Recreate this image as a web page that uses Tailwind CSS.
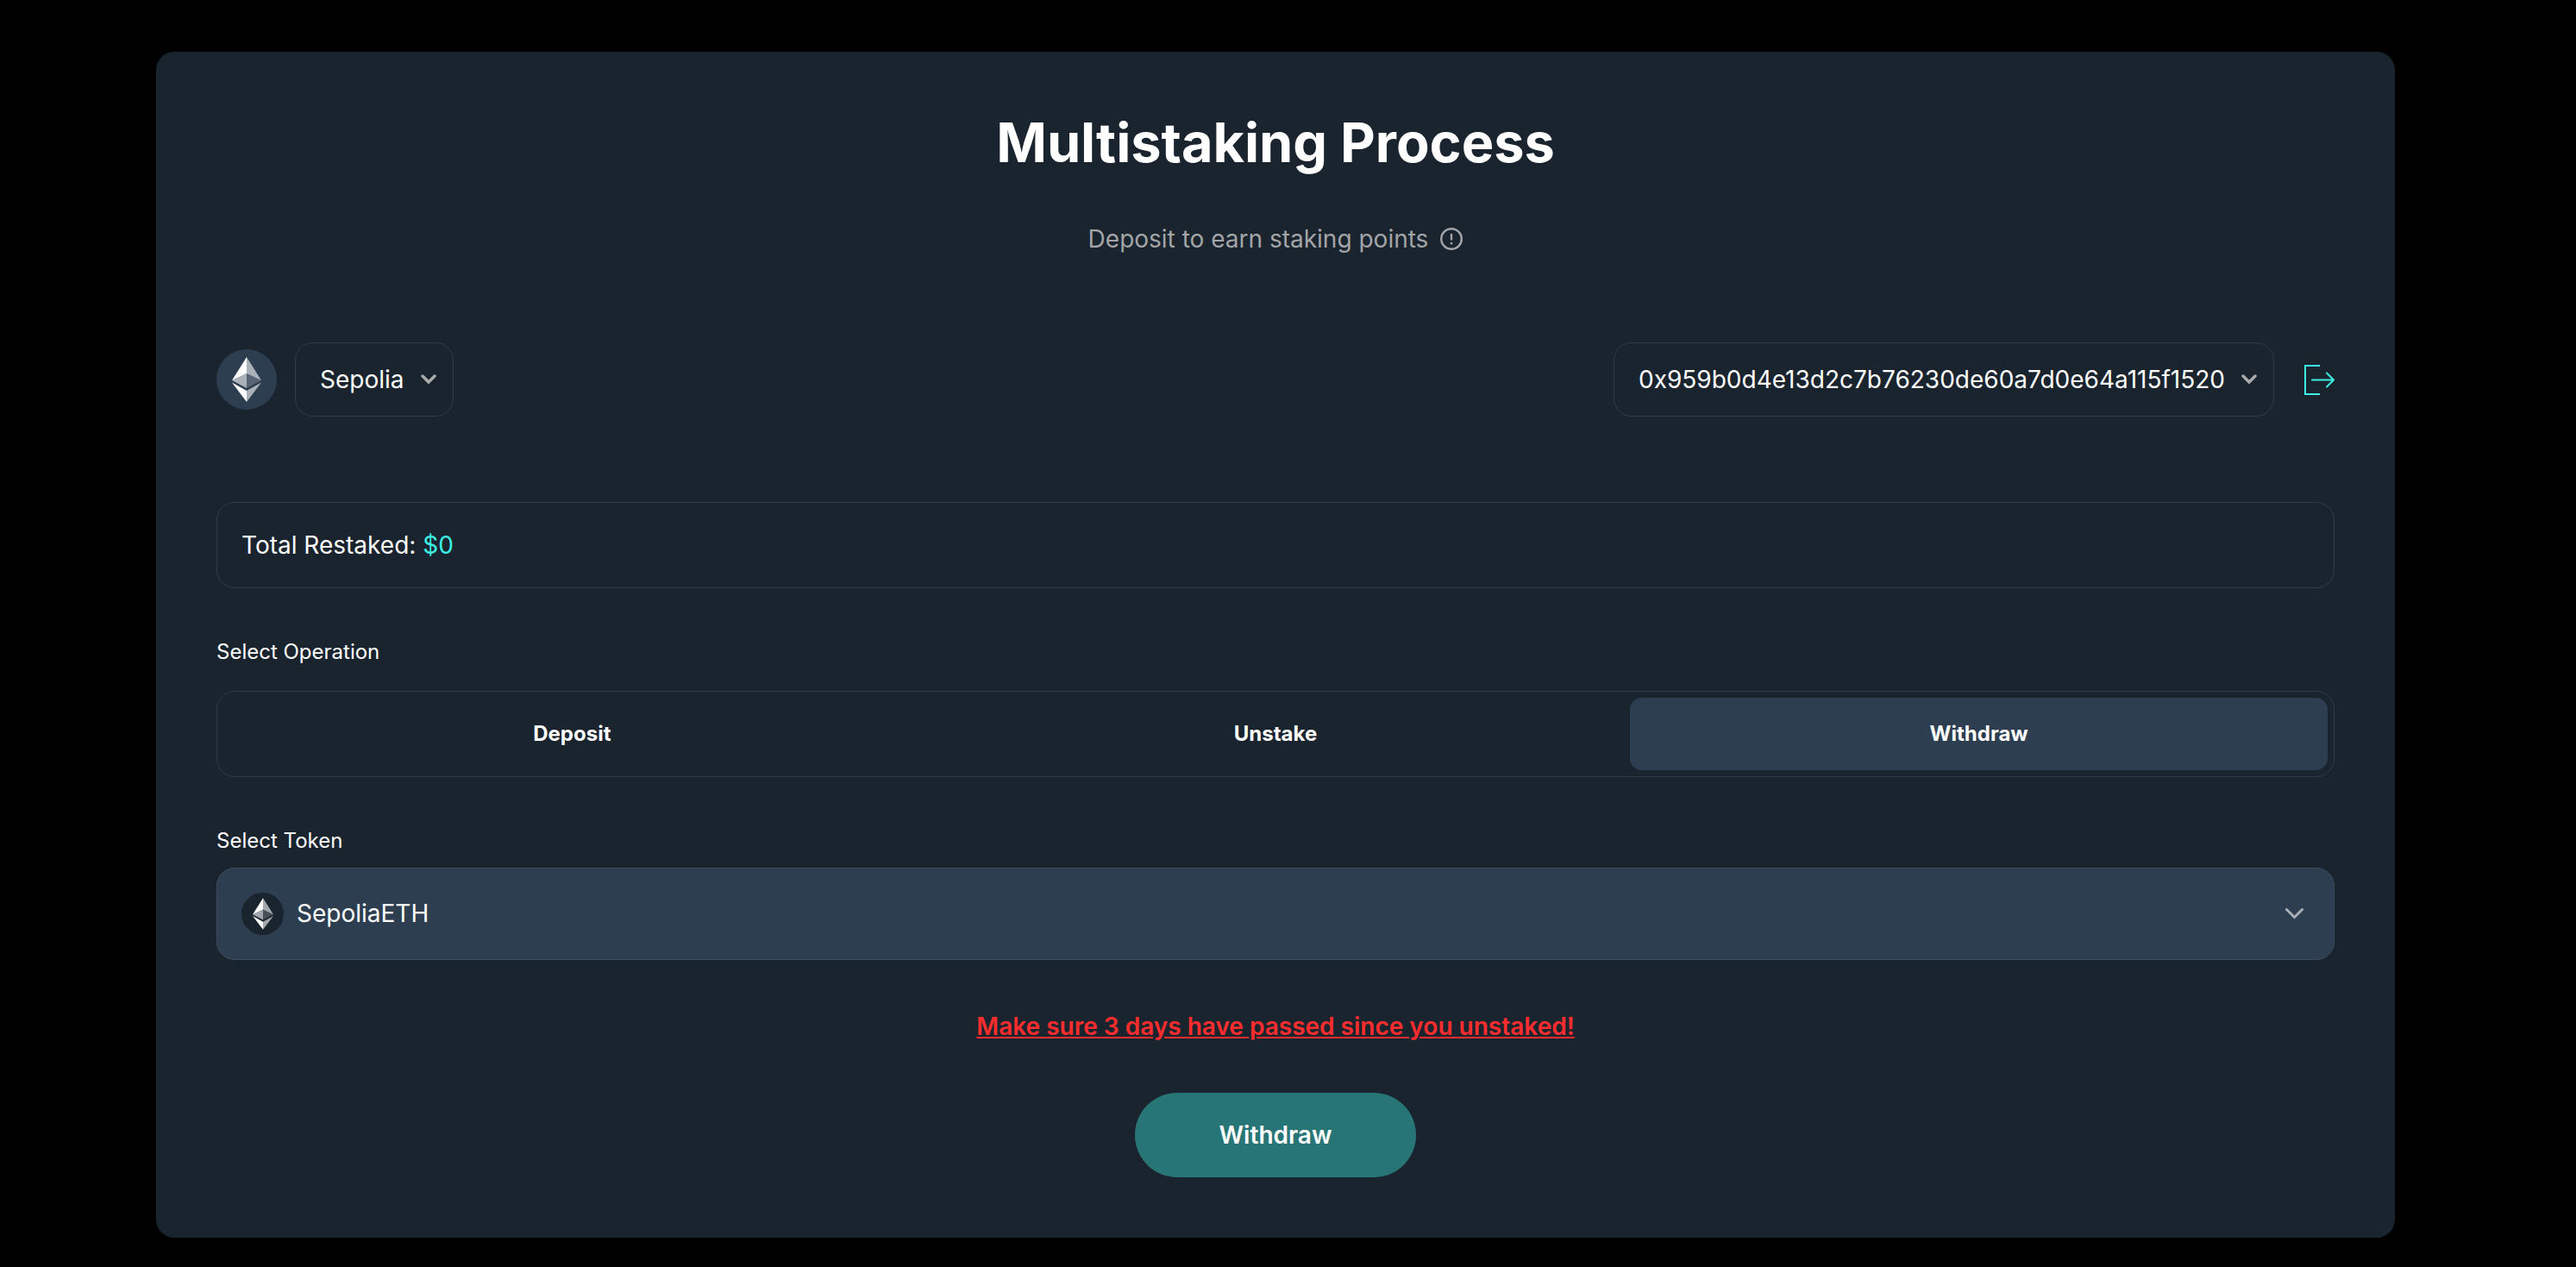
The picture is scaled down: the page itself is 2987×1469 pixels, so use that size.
<!DOCTYPE html>
<html lang="en">
<head>
<meta charset="utf-8">
<meta name="viewport" content="width=device-width, initial-scale=1">
<title>Multistaking Process</title>
<script src="https://cdn.jsdelivr.net/npm/@tailwindcss/browser@4"></script>
</head>
<body class="bg-black font-['Inter',sans-serif] text-[28px] leading-[42px] text-white">
<svg class="hidden" aria-hidden="true">
  <symbol id="eth" viewBox="0 0 34 52">
    <path fill="#fff" d="M17 0 0 27l17-8z"/>
    <path fill="#fff" fill-opacity=".6" d="M17 0v19l17 8z"/>
    <path fill="#fff" fill-opacity=".6" d="M17 19 0 27l17 9z"/>
    <path fill="#fff" fill-opacity=".2" d="M17 19v17l17-9z"/>
    <path fill="#fff" d="M0 29.500l17 22.500V39z"/>
    <path fill="#fff" fill-opacity=".6" d="M17 39v13l17-22.500z"/>
  </symbol>
  <symbol id="chevron" viewBox="0 0 18 12">
    <path fill="none" stroke="currentColor" stroke-width="3.500" stroke-linecap="round" d="M2 2l7 7 7-7"/>
  </symbol>
</svg>
<div class="pt-[60px] pr-[210px] pb-[34px] pl-[181px]">
  <main class="flex flex-col rounded-[21px] bg-[#1a242e] p-[70px]">
    <h1 class="text-center text-[63px] leading-[70px] font-bold">Multistaking Process</h1>
    <p class="mt-[56px] flex items-center justify-center gap-[14px] text-[#a3a5a8]">
      Deposit to earn staking points
      <svg class="size-[26px]" viewBox="0 0 26 26" fill="none" stroke="currentColor" stroke-width="2.400" role="img" aria-label="Information"><circle cx="13" cy="13" r="11.800"/><path d="M13 7v7.500M13 17v2.200"/></svg>
    </p>

    <div class="mt-[99px] flex items-center justify-between">
      <div class="flex items-center gap-[21px]">
        <span class="flex size-[70px] items-center justify-center rounded-full bg-[#2d3e50]"><svg class="h-[52px] w-[34px]"><use href="#eth"/></svg></span>
        <div class="relative flex">
          <select aria-label="Network" class="h-[86px] appearance-none rounded-[21px] border border-[#323b43] pr-[56px] pl-7"><option>Sepolia</option></select>
          <svg class="pointer-events-none absolute inset-y-0 right-5 my-auto h-3 w-[18px] text-[#ababab]"><use href="#chevron"/></svg>
        </div>
      </div>
      <div class="flex items-center gap-[35px]">
        <div class="relative flex">
          <select aria-label="Account" class="h-[86px] appearance-none rounded-[21px] border border-[#323b43] pr-[56px] pl-7"><option>0x959b0d4e13d2c7b76230de60a7d0e64a115f1520</option></select>
          <svg class="pointer-events-none absolute inset-y-0 right-5 my-auto h-3 w-[18px] text-[#ababab]"><use href="#chevron"/></svg>
        </div>
        <button type="button" aria-label="Disconnect" class="text-[#3cf0e4]"><svg class="size-[35px]" viewBox="0 0 35 35" fill="none" stroke="currentColor" stroke-width="2"><path d="M18 1H1v33h17"/><path stroke-linecap="round" stroke-linejoin="round" d="M9 17.500h25M26 9.500l8 8-8 8"/></svg></button>
      </div>
    </div>

    <div class="mt-[99px] flex h-[100px] items-center rounded-[21px] border border-[#323b43] px-7">
      <p>Total Restaked: <span class="text-[#3cf0e4]">$0</span></p>
    </div>

    <h2 id="operation" class="mt-[56px] text-2xl leading-[35px]">Select Operation</h2>
    <div role="group" aria-labelledby="operation" class="mt-7 grid h-[100px] grid-cols-3 gap-[7px] rounded-[21px] border border-[#323b43] p-[7px] text-2xl leading-[35px] font-bold">
      <button type="button" class="rounded-[14px] pb-0.5">Deposit</button>
      <button type="button" class="rounded-[14px] pb-0.5">Unstake</button>
      <button type="button" aria-pressed="true" class="rounded-[14px] bg-[#2d3e50] pb-0.5">Withdraw</button>
    </div>

    <label for="token" class="mt-[56px] text-2xl leading-[35px]">Select Token</label>
    <div class="relative mt-[14px] flex">
      <select id="token" class="h-[107px] w-full appearance-none rounded-[21px] border border-[#3f4e5f] bg-[#2d3e50] pr-[70px] pb-px pl-[92px]"><option>SepoliaETH</option></select>
      <span class="pointer-events-none absolute inset-y-0 left-[29px] my-auto flex size-[49px] items-center justify-center rounded-full bg-[#1a242e]"><svg class="h-[37px] w-6"><use href="#eth"/></svg></span>
      <svg class="pointer-events-none absolute inset-y-0 right-9 my-auto h-[13px] w-[21px] text-[#a9b0b8]" viewBox="0 0 21 13" fill="none" stroke="currentColor" stroke-width="3" stroke-linecap="round"><path d="M1.500 1.500l9 9 9-9"/></svg>
    </div>

    <p class="mt-[56px] text-center font-semibold text-[#ff2d2d] underline">Make sure 3 days have passed since you unstaked!</p>
    <button type="button" class="mt-[56px] h-[98px] w-[326px] self-center rounded-full bg-[#287576] font-semibold">Withdraw</button>
  </main>
</div>
</body>
</html>
